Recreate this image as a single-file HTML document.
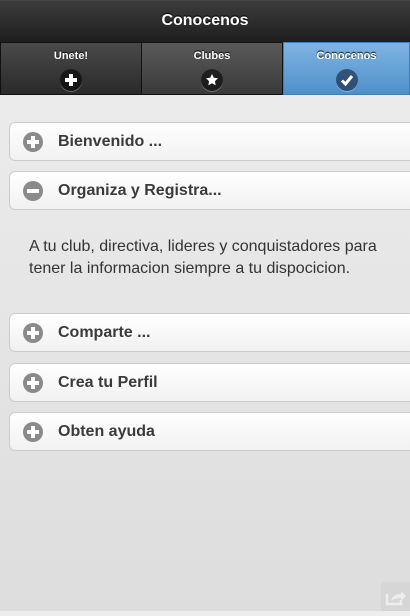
<!DOCTYPE html>
<html><head><style>
body{margin:0;width:410px;height:611px;overflow:hidden;font-family:"Liberation Sans",Arial,sans-serif;background:linear-gradient(#eee,#ddd);position:relative}
.hdr{position:absolute;left:0;top:0;width:410px;height:42px;background:linear-gradient(#3c3c3c,#1e1e1e);border-top:1px solid #444;box-sizing:border-box;color:#fff;font-weight:bold;font-size:16px;text-align:center;line-height:39px;text-shadow:0 -1px 1px #000}
.nav{position:absolute;top:42px;height:53px;box-sizing:border-box;border:1px solid #111;color:#fff;font-weight:bold;font-size:11px;text-align:center;text-shadow:0 -1px 1px #000}
.nav span{display:block;margin-top:7px}
.ic{position:absolute;left:50%;top:26px;margin-left:-11px;width:22px;height:22px;border-radius:50%;background:rgba(0,0,0,.55);box-shadow:0 1px 0 rgba(255,255,255,.3)}
.ic svg{position:absolute;left:0;top:0}
.col{position:absolute;left:9px;width:410px;height:39px;box-sizing:border-box;border:1px solid #ccc;border-radius:6px;background:linear-gradient(#fff,#f1f1f1);font-weight:bold;font-size:16px;color:#3a3a3a;line-height:37px;padding-left:48px;text-shadow:0 1px 0 #fff}
.ci{position:absolute;left:13px;top:9px;width:20px;height:20px;border-radius:50%;background:#8a8a8a}
.ci:before{content:"";position:absolute;left:4px;top:8px;width:12px;height:4px;background:#fff}
.ci.p:after{content:"";position:absolute;left:8px;top:4px;width:4px;height:12px;background:#fff}
.txt{position:absolute;left:29px;top:236px;font-size:16px;color:#333;line-height:22px}
</style></head><body>
<div class="hdr">Conocenos</div>
<div class="nav" style="left:0;width:142px;background:linear-gradient(#4a4a4a,#2a2a2a)"><span>Unete!</span><div class="ic"><svg width="22" height="22"><path d="M9 5h4v4h4v4h-4v4h-4v-4H5V9h4z" fill="#fff"/></svg></div></div>
<div class="nav" style="left:141px;width:142px;background:linear-gradient(#5a5a5a,#3a3a3a)"><span>Clubes</span><div class="ic"><svg width="22" height="22"><path d="M11 5l1.8 3.8 4.2.5-3.1 2.9.8 4.1-3.7-2.1-3.7 2.1.8-4.1-3.1-2.9 4.2-.5z" fill="#fff"/></svg></div></div>
<div class="nav" style="left:283px;width:127px;background:linear-gradient(#7fb5e3,#4f8fc9);border-color:#3f7fb8"><span>Conocenos</span><div class="ic" style="background:rgba(30,50,80,.7)"><svg width="22" height="22"><path d="M6 11.5l3.5 3.5 6.5-8" stroke="#fff" stroke-width="3" fill="none"/></svg></div></div>
<div class="col" style="top:122px"><div class="ci p"></div>Bienvenido ...</div>
<div class="col" style="top:171px"><div class="ci"></div>Organiza y Registra...</div>
<div class="txt">A tu club, directiva, lideres y conquistadores para<br>tener la informacion siempre a tu dispocicion.</div>
<div class="col" style="top:313px"><div class="ci p"></div>Comparte ...</div>
<div class="col" style="top:363px"><div class="ci p"></div>Crea tu Perfil</div>
<div class="col" style="top:412px"><div class="ci p"></div>Obten ayuda</div>
<div style="position:absolute;left:381px;top:582px;width:29px;height:29px;background:#d6d6d6;border-radius:4px 0 0 0"><svg width="29" height="29"><path d="M6 12v10h14v-4" stroke="#eee" stroke-width="2.5" fill="none"/><path d="M10 19c1-5 5-7 10-7v-3l5 5-5 5v-3c-4 0-7 1-10 3z" fill="#eee"/></svg></div>
</body></html>
